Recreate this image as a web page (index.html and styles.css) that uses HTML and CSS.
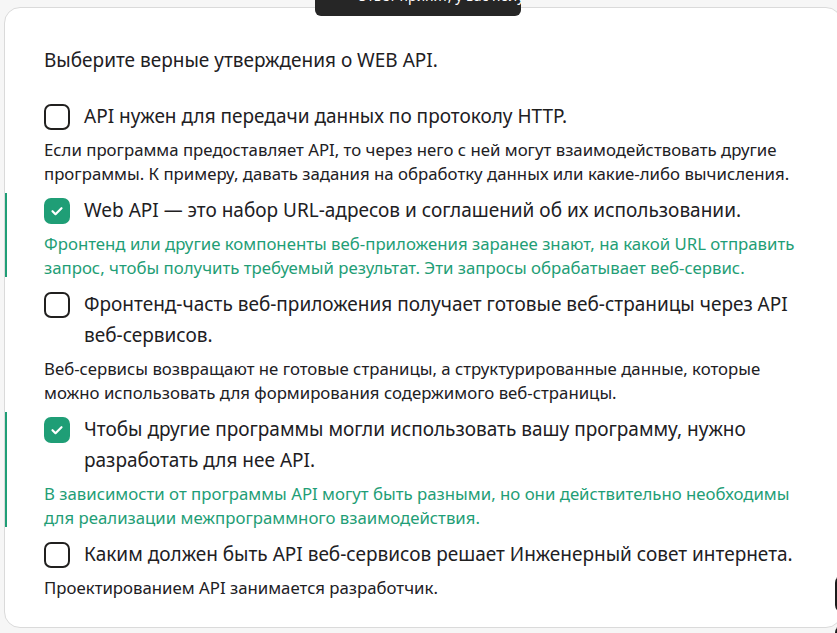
FILE: index.html
```html
<!DOCTYPE html>
<html lang="ru">
<head>
<meta charset="utf-8">
<link rel="stylesheet" href="styles.css">
</head>
<body>
<div class="toast"><span class="toast-text">✓ Ответ принят, у вас получилось</span></div>
<div class="card">
  <p class="question">Выберите верные утверждения о WEB API.</p>
  <div class="item">
    <div class="option"><span class="box"></span><span class="label">API нужен для передачи данных по протоколу HTTP.</span></div>
    <p class="expl">Если программа предоставляет API, то через него с ней могут взаимодействовать другие<br>программы. К примеру, давать задания на обработку данных или какие-либо вычисления.</p>
  </div>
  <div class="item correct">
    <div class="option"><span class="box checked"><svg viewBox="0 0 26 26" width="26" height="26"><path d="M8.5 13.2l3 3 6-6" fill="none" stroke="#fff" stroke-width="2.2" stroke-linecap="round" stroke-linejoin="round"/></svg></span><span class="label">Web API — это набор URL-адресов и соглашений об их использовании.</span></div>
    <p class="expl">Фронтенд или другие компоненты веб-приложения заранее знают, на какой URL отправить<br>запрос, чтобы получить требуемый результат. Эти запросы обрабатывает веб-сервис.</p>
  </div>
  <div class="item">
    <div class="option"><span class="box"></span><span class="label">Фронтенд-часть веб-приложения получает готовые веб-страницы через API<br>веб-сервисов.</span></div>
    <p class="expl">Веб-сервисы возвращают не готовые страницы, а структурированные данные, которые<br>можно использовать для формирования содержимого веб-страницы.</p>
  </div>
  <div class="item correct">
    <div class="option"><span class="box checked"><svg viewBox="0 0 26 26" width="26" height="26"><path d="M8.5 13.2l3 3 6-6" fill="none" stroke="#fff" stroke-width="2.2" stroke-linecap="round" stroke-linejoin="round"/></svg></span><span class="label">Чтобы другие программы могли использовать вашу программу, нужно<br>разработать для нее API.</span></div>
    <p class="expl">В зависимости от программы API могут быть разными, но они действительно необходимы<br>для реализации межпрограммного взаимодействия.</p>
  </div>
  <div class="item">
    <div class="option"><span class="box"></span><span class="label">Каким должен быть API веб-сервисов решает Инженерный совет интернета.</span></div>
    <p class="expl">Проектированием API занимается разработчик.</p>
  </div>
</div>
<div class="side-btns"><span class="side-btn"></span><span class="side-btn"></span></div>
</body>
</html>
```
FILE: styles.css
```css
html, body {
  margin: 0;
  padding: 0;
  height: 100%;
  overflow: hidden;
  background: #f6f6f6;
}
body {
  font-family: "Noto Sans", "Open Sans", sans-serif;
  color: #21201f;
  padding: 7px 0 0 4px;
  box-sizing: border-box;
}
.card {
  width: 838px;
  height: 621px;
  box-sizing: border-box;
  background: #fff;
  border: 1px solid #dadada;
  border-radius: 16px;
  padding: 39px 0 0 39px;
  overflow: hidden;
}
.question {
  margin: 0 0 24px;
  font-size: 19px;
  line-height: 26px;
}
.item {
  position: relative;
  padding: 4px 0 5px;
}
.item.correct::before {
  content: "";
  position: absolute;
  left: -41px;
  top: 2px;
  bottom: 8px;
  width: 4px;
  background: #1f9e76;
}
.option {
  display: flex;
  align-items: flex-start;
  gap: 14px;
  font-size: 19px;
  line-height: 31px;
}
.box {
  flex: none;
  width: 26px;
  height: 26px;
  margin-top: 3px;
  box-sizing: border-box;
  border: 2px solid #21201f;
  border-radius: 7px;
}
.box.checked {
  border: none;
  background: #1f9e76;
}
.box svg {
  display: block;
}
.label {
  white-space: nowrap;
}
.expl {
  margin: 6px 0 0;
  font-size: 16.8px;
  line-height: 24px;
  white-space: nowrap;
}
.correct .expl {
  color: #1f9e76;
}
.toast {
  position: absolute;
  left: 315px;
  top: 0;
  width: 206px;
  height: 16px;
  background: #262626;
  border-radius: 0 0 6px 6px;
  overflow: hidden;
}
.toast-text {
  position: absolute;
  left: 26px;
  top: -14px;
  font-size: 14px;
  line-height: 20px;
  color: #fff;
  white-space: nowrap;
}
.side-btns {
  position: absolute;
  left: 835px;
  top: 575px;
  display: flex;
  flex-direction: column;
  gap: 12px;
}
.side-btn {
  width: 40px;
  height: 38px;
  background: #1c1c1c;
  border-radius: 8px;
}
```
